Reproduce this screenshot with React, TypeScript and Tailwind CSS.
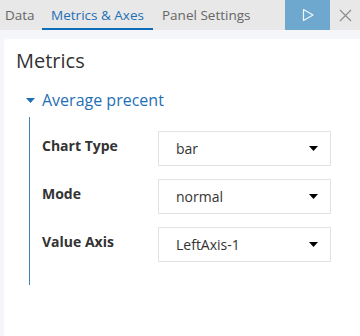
import React from "react";

const FIELDS = [
  { label: "Chart Type", value: "bar" },
  { label: "Mode", value: "normal" },
  { label: "Value Axis", value: "LeftAxis-1" },
];

function Caret({ className }: { className?: string }) {
  return (
    <svg width="9" height="5" viewBox="0 0 9 5" className={className}>
      <path d="M0 0 H9 L4.5 5 Z" fill="currentColor" />
    </svg>
  );
}

export default function App() {
  return (
    <div
      className="flex h-[336px] w-[360px] flex-col overflow-hidden bg-[#f4f6f9] text-[#333]"
      style={{ fontFamily: '"Open Sans", sans-serif' }}
    >
      {/* tab bar */}
      <div className="flex h-[30px] shrink-0 items-stretch bg-[#e8e8e8] text-[13.5px]">
        <button className="flex w-[42px] items-center pl-[5px] text-[#666]">Data</button>
        <button className="flex w-[111px] items-center justify-center border-b-2 border-[#0f6cb6] pt-[2px] text-[#1f6fb5]">
          Metrics &amp; Axes
        </button>
        <button className="flex items-center px-[9px] text-[#666]">Panel Settings</button>
        <div className="flex-1" />
        <button className="flex w-[45px] items-center justify-center bg-[#6fa8cf]">
          <svg width="14" height="14" viewBox="0 0 14 14">
            <path d="M2.5 1.5 L12 7 L2.5 12.5 Z" fill="none" stroke="#f2f7fb" strokeWidth="1.2" strokeLinejoin="round" />
          </svg>
        </button>
        <button className="flex w-[30px] items-center justify-center">
          <svg width="13" height="13" viewBox="0 0 13 13">
            <path d="M1 1 L12 12 M12 1 L1 12" stroke="#8a8a8a" strokeWidth="1.1" />
          </svg>
        </button>
      </div>

      {/* panel */}
      <div className="ml-[4px] mt-[9px] flex-1 rounded-tl-[4px] bg-white pl-[12px] pt-[8px]">
        <h2 className="text-[20px] leading-[28px] text-[#333]">Metrics</h2>

        <div className="mt-[13px] pl-[10px]">
          <div className="flex items-center gap-[7px] text-[16px] leading-[24px] text-[#1f6fb5]">
            <Caret className="text-[#1f6fb5]" />
            <span>Average precent</span>
          </div>

          <div className="ml-[3px] mt-[5px] flex flex-col gap-[13px] border-l border-[#3b80b7] pb-[23px] pl-[12px] pt-[14px]">
            {FIELDS.map((f) => (
              <div key={f.label} className="flex items-start">
                <div className="w-[116px] pt-[5px] text-[14px] font-bold leading-[20px] text-[#333]">
                  {f.label}
                </div>
                <div className="flex h-[35px] w-[173px] items-center justify-between border border-[#e2e2e2] pl-[17px] pr-[12px] text-[14px] text-[#333]">
                  <span>{f.value}</span>
                  <Caret className="text-black" />
                </div>
              </div>
            ))}
          </div>
        </div>
      </div>
    </div>
  );
}
